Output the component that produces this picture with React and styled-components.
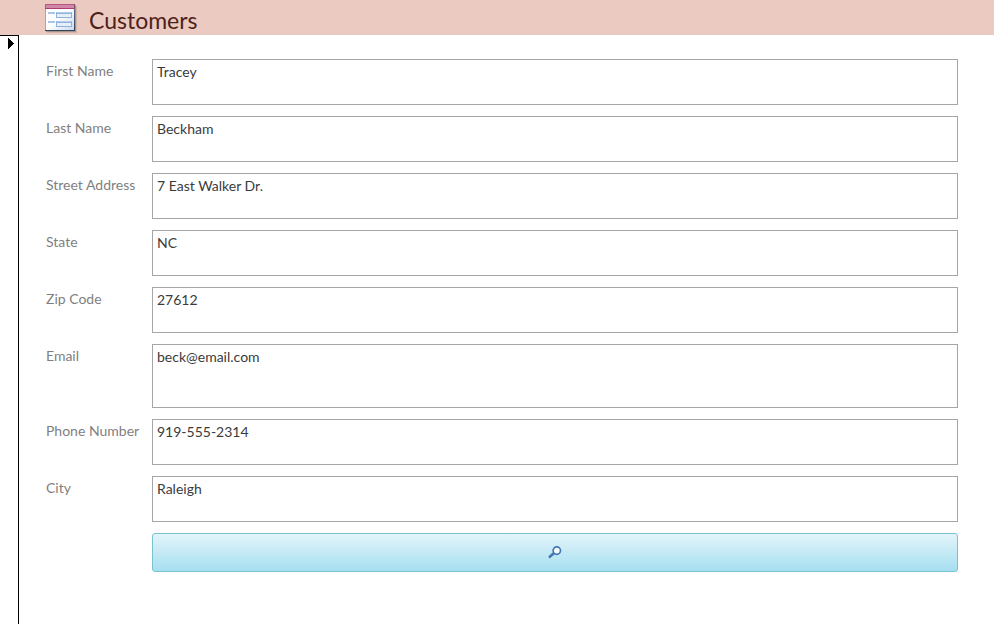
import React from "react";
import styled, { createGlobalStyle } from "styled-components";

const GlobalStyle = createGlobalStyle`
    * {
        box-sizing: border-box;
    }
    body {
        margin: 0;
        background-color: #fff;
        font-family: Lato, "Open Sans", sans-serif;
    }
`;

const Page = styled.div`
    display: flex;
    flex-direction: column;
    min-height: 100vh;
`;

const Header = styled.header`
    display: flex;
    align-items: flex-start;
    gap: 12px;
    height: 35px;
    padding: 4px 44px 0;
    background-color: #ebcbc1;
`;

const Title = styled.h1`
    margin: 0;
    padding-top: 2px;
    color: #4e1f1b;
    font-size: 23px;
    font-weight: 400;
    line-height: 28px;
`;

const Body = styled.div`
    display: flex;
    flex: 1;
`;

const RecordSelector = styled.button`
    display: flex;
    align-items: flex-start;
    justify-content: flex-end;
    width: 19px;
    padding: 2px 3px 0 0;
    border: solid #000;
    border-width: 1px 1px 0 0;
    background-color: #fff;
`;

const Form = styled.form`
    display: flex;
    flex: 1;
    flex-direction: column;
    gap: 11px;
    padding: 24px 36px 24px 27px;
`;

const Row = styled.div`
    display: grid;
    grid-template-columns: 106px 1fr;
    align-items: start;
`;

const Label = styled.label`
    padding-top: 3px;
    color: #7f7f7f;
    font-size: 14px;
    line-height: 18px;
    white-space: nowrap;
`;

const Field = styled.textarea`
    display: block;
    width: 100%;
    height: ${({ $tall }) => ($tall ? "64px" : "46px")};
    margin: 0;
    padding: 3px 4px;
    border: 1px solid #a6a6a6;
    border-radius: 0;
    outline: none;
    background-color: #fff;
    color: #3b3b3b;
    font-family: inherit;
    font-size: 14px;
    line-height: 18px;
    resize: none;
`;

const SearchButton = styled.button`
    display: flex;
    grid-column: 2;
    align-items: center;
    justify-content: center;
    height: 39px;
    padding: 0;
    border: 1px solid #7ac3d3;
    border-radius: 3px;
    background: linear-gradient(#e3f4fa, #a6dff0);
    cursor: pointer;
`;

const FormIcon = () => (
    <svg width="33" height="30" viewBox="0 0 33 30" aria-hidden="true">
        <defs>
            <linearGradient id="sheet" x1="0" y1="0" x2="1" y2="1">
                <stop offset="0" stopColor="#fff" />
                <stop offset="0.5" stopColor="#fdfeff" />
                <stop offset="1" stopColor="#c9daf0" />
            </linearGradient>
            <linearGradient id="edge" x1="0" y1="0" x2="0" y2="1">
                <stop offset="0" stopColor="#8b4a68" />
                <stop offset="0.3" stopColor="#5a6a86" />
                <stop offset="1" stopColor="#2f4257" />
            </linearGradient>
        </defs>
        <rect x="3" y="2" width="30" height="27" fill="#bc9f98" opacity="0.5" />
        <rect x="2" y="1" width="30" height="27" fill="#8b7d80" opacity="0.6" />
        <rect x="1" y="0" width="30" height="27" fill="url(#edge)" />
        <rect x="1" y="0" width="1" height="26" fill="#9aaac4" />
        <rect x="2" y="1" width="28" height="25" fill="url(#sheet)" />
        <rect x="1" y="0" width="29" height="5" fill="#bb5380" />
        <rect x="2" y="1" width="28" height="3" fill="#d087a8" />
        <rect x="1" y="4" width="29" height="1" fill="#b23a70" />
        <rect x="4" y="8" width="7" height="2" fill="#a9c4e6" />
        <rect x="4" y="17" width="7" height="2" fill="#a9c4e6" />
        <rect x="12" y="8" width="16" height="6" fill="#8fb3de" />
        <rect x="12" y="17" width="16" height="6" fill="#8fb3de" />
        <rect x="13" y="10" width="14" height="3" fill="#e6eef8" />
        <rect x="13" y="19" width="14" height="3" fill="#e6eef8" />
        <path d="M13 8.5h14M13 17.5h14" stroke="#b4cdea" />
    </svg>
);

const ArrowIcon = () => (
    <svg width="7" height="11" viewBox="0 0 7 11" shapeRendering="crispEdges" aria-hidden="true">
        <path d="M0 0h1v1h1v1h1v1h1v1h1v1h1v1h-1v1h-1v1h-1v1h-1v1h-1v1h-1z" />
    </svg>
);

const SearchIcon = () => (
    <svg width="14" height="14" viewBox="0 0 14 14" aria-hidden="true">
        <path d="M5.5 7.5L1.8 10.8" stroke="#4677b5" strokeWidth="2.6" strokeLinecap="round" />
        <circle cx="8.8" cy="4.6" r="3.7" fill="#f5fafd" stroke="#4677b5" strokeWidth="1.7" />
    </svg>
);

const fields = [
    { id: "firstName", label: "First Name", value: "Tracey" },
    { id: "lastName", label: "Last Name", value: "Beckham" },
    { id: "street", label: "Street Address", value: "7 East Walker Dr." },
    { id: "state", label: "State", value: "NC" },
    { id: "zip", label: "Zip Code", value: "27612" },
    { id: "email", label: "Email", value: "beck@email.com", tall: true },
    { id: "phone", label: "Phone Number", value: "919-555-2314" },
    { id: "city", label: "City", value: "Raleigh" },
];

const App = () => {
    return (
        <Page>
            <GlobalStyle />
            <Header>
                <FormIcon />
                <Title>Customers</Title>
            </Header>
            <Body>
                <RecordSelector type="button" aria-label="Select record">
                    <ArrowIcon />
                </RecordSelector>
                <Form onSubmit={(e) => e.preventDefault()}>
                    {fields.map(({ id, label, value, tall }) => (
                        <Row key={id}>
                            <Label htmlFor={id}>{label}</Label>
                            <Field id={id} name={id} defaultValue={value} $tall={tall} spellCheck={false} />
                        </Row>
                    ))}
                    <Row>
                        <SearchButton type="submit" aria-label="Search">
                            <SearchIcon />
                        </SearchButton>
                    </Row>
                </Form>
            </Body>
        </Page>
    );
};

export default App;
